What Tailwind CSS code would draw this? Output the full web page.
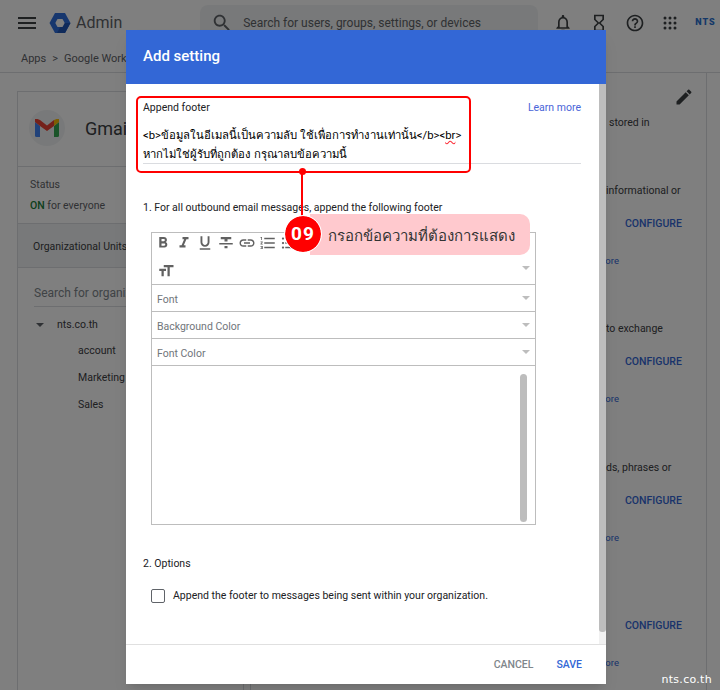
<!DOCTYPE html>
<html lang="en">
<head>
    <meta charset="UTF-8">
    <script src="https://cdn.jsdelivr.net/npm/@tailwindcss/browser@4"></script>
    <title>Admin - Append footer</title>
</head>
<body class="bg-white font-['Roboto','Noto_Sans','DejaVu_Sans',sans-serif]">
<div class="relative w-[720px] h-[690px] overflow-hidden bg-white text-[#3c4043]">

    <!-- top bar -->
    <header class="h-[46px] flex items-center">
        <svg class="w-6 h-6 ml-[15px] fill-[#3c4043]" viewBox="0 0 24 24"><path d="M3 18h18v-2H3v2zm0-5h18v-2H3v2zm0-7v2h18V6H3z"/></svg>
        <svg class="w-[22px] h-[22px] ml-[10px]" viewBox="0 0 22 22"><path d="M6 1h10l5.500 10-5.500 10H6L.5 11z" fill="#2f6fdc"/><path d="M21.500 11l-5.500 10H8l3-5.500 4-4.500z" fill="#1f55b5"/><path d="M8.500 7h5l2.200 4-2.200 4h-5L6.300 11z" fill="#fff"/></svg>
        <span class="ml-[5px] text-[16px] text-[#5f6368]">Admin</span>
        <div class="ml-[78px] w-[338px] h-[36px] bg-[#f1f3f4] rounded-lg flex items-center shrink-0">
            <svg class="w-[22px] h-[22px] ml-[11px] fill-[#5f6368]" viewBox="0 0 24 24"><path d="M15.500 14h-.79l-.28-.27C15.410 12.590 16 11.110 16 9.500 16 5.910 13.090 3 9.500 3S3 5.910 3 9.500 5.910 16 9.500 16c1.610 0 3.090-.59 4.230-1.570l.27.28v.79l5 4.990L20.490 19l-4.990-5zm-6 0C7.010 14 5 11.990 5 9.500S7.010 5 9.500 5 14 7.010 14 9.500 11.990 14 9.500 14z"/></svg>
            <span class="ml-[10px] text-[12px] text-[#5f6368]">Search for users, groups, settings, or devices</span>
        </div>
        <svg class="w-[20px] h-[20px] ml-[15px] fill-[#3c4043] shrink-0" viewBox="0 0 24 24"><path d="M12 22c1.100 0 2-.9 2-2h-4c0 1.100.9 2 2 2zm6-6v-5c0-3.070-1.630-5.640-4.500-6.320V4c0-.83-.67-1.500-1.500-1.500s-1.500.67-1.500 1.500v.68C7.640 5.360 6 7.920 6 11v5l-2 2v1h16v-1l-2-2zm-2 1H8v-6c0-2.480 1.510-4.500 4-4.500s4 2.020 4 4.500v6z"/></svg>
        <svg class="w-[20px] h-[20px] ml-[16px] fill-[#3c4043] shrink-0" viewBox="0 0 24 24"><path d="M6 2v6h.01L6 8.010 10 12l-4 4 .01.01H6V22h12v-5.990h-.01L18 16l-4-4 4-3.990-.01-.01H18V2H6zm10 14.500V20H8v-3.500l4-4 4 4zm-4-5l-4-4V4h8v3.500l-4 4z"/></svg>
        <svg class="w-[20px] h-[20px] ml-[16px] fill-[#3c4043] shrink-0" viewBox="0 0 24 24"><path d="M11 18h2v-2h-2v2zm1-16C6.480 2 2 6.480 2 12s4.480 10 10 10 10-4.480 10-10S17.520 2 12 2zm0 18c-4.410 0-8-3.590-8-8s3.590-8 8-8 8 3.590 8 8-3.590 8-8 8zm0-14c-2.210 0-4 1.790-4 4h2c0-1.100.9-2 2-2s2 .9 2 2c0 2-3 1.750-3 5h2c0-2.250 3-2.500 3-5 0-2.210-1.790-4-4-4z"/></svg>
        <svg class="w-[14px] h-[14px] ml-[18px] fill-[#3c4043] shrink-0" viewBox="0 0 14 14"><circle cx="2" cy="2" r="1.500"/><circle cx="7" cy="2" r="1.500"/><circle cx="12" cy="2" r="1.500"/><circle cx="2" cy="7" r="1.500"/><circle cx="7" cy="7" r="1.500"/><circle cx="12" cy="7" r="1.500"/><circle cx="2" cy="12" r="1.500"/><circle cx="7" cy="12" r="1.500"/><circle cx="12" cy="12" r="1.500"/></svg>
        <span class="ml-[18px] text-[9px] font-black tracking-[1px] text-[#2a70d0]">NTS</span>
    </header>

    <!-- breadcrumb -->
    <div class="h-[25px] border-b border-[#dadce0] pl-[21px] pt-[1px] flex items-center gap-[6px] text-[11px] text-[#5f6368] box-content">
        <span>Apps</span><span>&gt;</span><span class="whitespace-nowrap">Google Workspace</span>
    </div>

    <!-- page body -->
    <div class="flex pl-[17px]">
        <aside class="mt-[18px] w-[227px] h-[620px] border border-[#dadce0] shrink-0">
            <div class="h-[75px] flex items-center pb-[2px] pl-[11px] border-b border-[#dadce0]">
                <div class="w-[36px] h-[36px] rounded-full bg-[#f1f3f4] flex items-center justify-center">
                    <svg class="w-[24px] h-[18px]" viewBox="0 0 24 18"><path d="M0 3v13.500A1.500 1.500 0 0 0 1.500 18H5V7z" fill="#4285f4"/><path d="M24 3v13.500a1.500 1.500 0 0 1-1.500 1.500H19V7z" fill="#34a853"/><path d="M0 3l5 4 7 5 7-5V1L12 6.500 5 1 2.500 0A1.800 1.800 0 0 0 0 3z" fill="#ea4335"/><path d="M19 1v6l5-4a1.800 1.800 0 0 0-2.500-3z" fill="#fbbc04"/></svg>
                </div>
                <span class="ml-[20px] text-[18px] text-[#3c4043]">Gmail</span>
            </div>
            <div class="h-[57px] pl-[12px] pt-[7px] border-b border-[#dadce0] text-[10.500px] leading-[21px]">
                <div class="text-[#5f6368]">Status</div>
                <div class="text-[#5f6368]"><span class="text-[#188038] font-medium">ON</span> for everyone</div>
            </div>
            <div class="h-[44px] pl-[15px] pt-[2px] flex items-center bg-[#f1f3f4] border-b border-[#dadce0] text-[10.500px] whitespace-nowrap">Organizational Units</div>
            <div class="pl-[16px] pt-[16px] text-[10.500px]">
                <div class="h-[23px] w-[200px] border-b border-[#dadce0] text-[12px] text-[#80868b] whitespace-nowrap overflow-hidden">Search for organizational</div>
                <div class="mt-[4px] h-[27px] flex items-center text-[#3c4043]">
                    <span class="ml-[2px] w-0 h-0 border-x-[4px] border-x-transparent border-t-[4px] border-t-[#5f6368]"></span>
                    <span class="ml-[13px]">nts.co.th</span>
                </div>
                <div class="pl-[44px] leading-[27px] -mt-[1px]">
                    <div>account</div>
                    <div>Marketing</div>
                    <div>Sales</div>
                </div>
            </div>
        </aside>
        <main class="ml-[6px] w-[457px] h-[618px] border-x border-[#dadce0] relative pl-[355px] text-[10.500px] shrink-0">
            <svg class="absolute left-[423px] top-[14px] w-[20px] h-[20px] fill-[#3c4043]" viewBox="0 0 24 24"><path d="M3 17.250V21h3.750L17.810 9.940l-3.750-3.750L3 17.250zM20.710 7.040c.39-.39.39-1.020 0-1.410l-2.340-2.340c-.39-.39-1.020-.39-1.410 0l-1.830 1.830 3.750 3.750 1.830-1.830z"/></svg>
            <div class="pt-[42px] h-[91px] pl-[3px]">stored in</div>
            <section class="h-[138px] pt-[19px]">
                <div class="whitespace-nowrap">informational or</div>
                <div class="mt-[17px] pl-[19px] font-medium text-[#3367d6]">CONFIGURE</div>
                <div class="mt-[22px] -ml-[9px] text-[9.500px] text-[#3367d6]">more</div>
            </section>
            <section class="h-[139px] pt-[19px]">
                <div class="whitespace-nowrap">to exchange</div>
                <div class="mt-[17px] pl-[19px] font-medium text-[#3367d6]">CONFIGURE</div>
                <div class="mt-[22px] -ml-[9px] text-[9.500px] text-[#3367d6]">more</div>
            </section>
            <section class="h-[125px] pt-[19px]">
                <div class="whitespace-nowrap">ds, phrases or</div>
                <div class="mt-[17px] pl-[19px] font-medium text-[#3367d6]">CONFIGURE</div>
                <div class="mt-[22px] -ml-[9px] text-[9.500px] text-[#3367d6]">more</div>
            </section>
            <section class="pt-[52px]">
                <div class="pl-[19px] font-medium text-[#3367d6]">CONFIGURE</div>
                <div class="mt-[22px] -ml-[9px] text-[9.500px] text-[#3367d6]">more</div>
            </section>
        </main>
    </div>

    <!-- scrim -->
    <div class="absolute inset-0 bg-black/50"></div>

    <!-- dialog -->
    <div class="absolute left-[126px] top-[30px] w-[480px] h-[654px] bg-white rounded-t-[2px] flex flex-col text-[#202124] shadow-lg">
        <div class="h-[54px] bg-[#3367d6] flex items-center pl-[17px] pb-[1px] text-[15px] font-medium text-white shrink-0">Add setting</div>
        <div class="flex flex-1 min-h-0">
            <div class="flex-1 pl-[17px] pr-[18px] text-[10.500px]">
                <div class="pt-[16px] flex justify-between">
                    <span>Append footer</span>
                    <span class="text-[#4a64d8]">Learn more</span>
                </div>
                <div class="mt-[10px] h-[37px] border-b border-[#dadce0] text-[11.300px] leading-[19px] text-black box-content">
                    <div class="whitespace-nowrap">&lt;b&gt;ข้อมูลในอีเมลนี้เป็นความลับ ใช้เพื่อการทำงานเท่านั้น&lt;/b&gt;&lt;<span class="underline decoration-wavy decoration-red-500">br</span>&gt;</div>
                    <div class="whitespace-nowrap">หากไม่ใช่ผู้รับที่ถูกต้อง กรุณาลบข้อความนี้</div>
                </div>
                <div class="mt-[36px]">1. For all outbound email messages, append the following footer</div>
                <!-- editor -->
                <div class="mt-[16px] ml-[8px] w-[385px] h-[293px] border border-[#bdbdbd] flex flex-col text-[#70757a]">
                    <div class="h-[20px] flex items-center pl-[2px] gap-[3px] shrink-0">
                        <svg class="w-[18px] h-[18px] fill-[#616161]" viewBox="0 0 24 24"><path d="M15.600 10.790c.97-.67 1.650-1.770 1.650-2.790 0-2.260-1.750-4-4-4H7v14h7.040c2.090 0 3.710-1.700 3.710-3.790 0-1.520-.86-2.820-2.150-3.420zM10 6.500h3c.83 0 1.500.67 1.500 1.500s-.67 1.500-1.500 1.500h-3v-3zm3.500 9H10v-3h3.500c.83 0 1.500.67 1.500 1.500s-.67 1.500-1.500 1.500z"/></svg>
                        <svg class="w-[18px] h-[18px] fill-[#616161]" viewBox="0 0 24 24"><path d="M10 4v3h2.210l-3.420 8H6v3h8v-3h-2.210l3.420-8H18V4z"/></svg>
                        <svg class="w-[18px] h-[18px] fill-[#616161]" viewBox="0 0 24 24"><path d="M12 17c3.310 0 6-2.690 6-6V3h-2.500v8c0 1.930-1.570 3.500-3.500 3.500S8.500 12.930 8.500 11V3H6v8c0 3.310 2.690 6 6 6zm-7 2v2h14v-2H5z"/></svg>
                        <svg class="w-[18px] h-[18px] fill-[#616161]" viewBox="0 0 24 24"><path d="M10 19h4v-3h-4v3zM5 4v3h5v3h4V7h5V4H5zM3 14h18v-2H3v2z"/></svg>
                        <svg class="w-[18px] h-[18px] fill-[#616161]" viewBox="0 0 24 24"><path d="M3.900 12c0-1.710 1.390-3.100 3.100-3.100h4V7H7c-2.760 0-5 2.240-5 5s2.240 5 5 5h4v-1.900H7c-1.710 0-3.100-1.390-3.100-3.100zM8 13h8v-2H8v2zm9-6h-4v1.900h4c1.710 0 3.100 1.390 3.100 3.100s-1.390 3.100-3.100 3.100h-4V17h4c2.760 0 5-2.240 5-5s-2.240-5-5-5z"/></svg>
                        <svg class="w-[18px] h-[18px] fill-[#616161]" viewBox="0 0 24 24"><path d="M2 17h2v.5H3v1h1v.5H2v1h3v-4H2v1zm1-9h1V4H2v1h1v3zm-1 3h1.800L2 13.100v.9h3v-1H3.200L5 10.900V10H2v1zm5-6v2h14V5H7zm0 14h14v-2H7v2zm0-6h14v-2H7v2z"/></svg>
                        <svg class="w-[18px] h-[18px] fill-[#616161]" viewBox="0 0 24 24"><path d="M4 10.500c-.83 0-1.500.67-1.500 1.500s.67 1.500 1.500 1.500 1.500-.67 1.500-1.500-.67-1.500-1.500-1.500zm0-6c-.83 0-1.500.67-1.500 1.500S3.170 7.500 4 7.500 5.500 6.830 5.500 6 4.830 4.500 4 4.500zm0 12c-.83 0-1.500.68-1.500 1.500s.68 1.500 1.500 1.500 1.500-.68 1.500-1.500-.67-1.500-1.500-1.500zM7 19h14v-2H7v2zm0-6h14v-2H7v2zm0-8v2h14V5H7z"/></svg>
                    </div>
                    <div class="h-[32px] flex items-center justify-between pl-[5px] pr-[5px] border-b border-[#bdbdbd] shrink-0">
                        <svg class="w-[18px] h-[18px] mt-[6px] fill-[#616161]" viewBox="0 0 24 24"><path d="M9 4v3h5v12h3V7h5V4H9zm-6 8h3v7h3v-7h3V9H3v3z"/></svg>
                        <span class="w-0 h-0 border-x-[4px] border-x-transparent border-t-[4px] border-t-[#bdbdbd]"></span>
                    </div>
                    <div class="h-[27px] flex items-center justify-between pl-[5px] pr-[5px] border-b border-[#bdbdbd] shrink-0">
                        <span class="pt-[4px]">Font</span>
                        <span class="w-0 h-0 border-x-[4px] border-x-transparent border-t-[4px] border-t-[#bdbdbd]"></span>
                    </div>
                    <div class="h-[27px] flex items-center justify-between pl-[5px] pr-[5px] border-b border-[#bdbdbd] shrink-0">
                        <span class="pt-[4px]">Background Color</span>
                        <span class="w-0 h-0 border-x-[4px] border-x-transparent border-t-[4px] border-t-[#bdbdbd]"></span>
                    </div>
                    <div class="h-[27px] flex items-center justify-between pl-[5px] pr-[5px] border-b border-[#bdbdbd] shrink-0">
                        <span class="pt-[4px]">Font Color</span>
                        <span class="w-0 h-0 border-x-[4px] border-x-transparent border-t-[4px] border-t-[#bdbdbd]"></span>
                    </div>
                    <div class="flex-1 flex justify-end pr-[8px] pt-[8px] pb-[2px]">
                        <div class="w-[7px] bg-[#bdbdbd] rounded-full"></div>
                    </div>
                </div>
                <div class="mt-[31px]">2. Options</div>
                <label class="mt-[17px] ml-[8px] flex items-center gap-[8px]">
                    <span class="w-[14px] h-[14px] border border-[#5f6368] rounded-[2px]"></span>
                    <span>Append the footer to messages being sent within your organization.</span>
                </label>
            </div>
            <!-- dialog scrollbar -->
            <div class="w-[7px] bg-[#f1f1f1] shrink-0">
                <div class="h-[548px] bg-[#bdbdbd] rounded-b-[3px]"></div>
            </div>
        </div>
        <div class="h-[40px] border-t border-[#e0e0e0] flex items-center justify-end gap-[23px] pr-[24px] text-[10.500px] font-medium shrink-0">
            <span class="text-[#80868b]">CANCEL</span>
            <span class="text-[#3367d6]">SAVE</span>
        </div>
    </div>

    <!-- tutorial annotation -->
    <div class="absolute left-[136px] top-[96px] w-[335px] h-[77px] border-2 border-[#f00] rounded-[5px]"></div>
    <div class="absolute left-[301px] top-[172px] w-[2px] h-[44px] bg-[#f00]"></div>
    <div class="absolute left-[299px] top-[168px] w-[7px] h-[7px] rounded-full bg-[#f00]"></div>
    <div class="absolute left-[310px] top-[214px] w-[220px] h-[41px] rounded-r-[10px] bg-[#ffc9ce] flex items-center pl-[18px] pt-[3px] text-[15px] text-[#333] whitespace-nowrap">กรอกข้อความที่ต้องการแสดง</div>
    <div class="absolute left-[285px] top-[216px] w-[36px] h-[36px] rounded-full bg-[#f00] outline-1 outline-white flex items-center justify-center text-[19px] tracking-[1px] font-bold text-white">09</div>

    <div class="absolute right-[8px] bottom-[2px] text-[11px] tracking-[0.300px] text-white font-['DejaVu_Sans',sans-serif]">nts.co.th</div>
</div>
</body>
</html>
